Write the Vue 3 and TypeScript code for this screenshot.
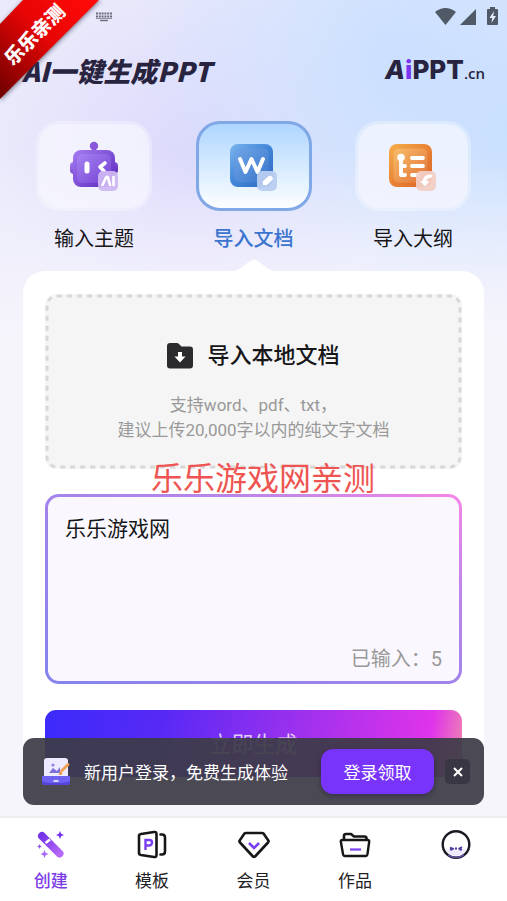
<script setup lang="ts">
import { ref, computed } from 'vue'

type TabId = 'topic' | 'doc' | 'outline'

const tabs: { id: TabId; label: string }[] = [
  { id: 'topic', label: '输入主题' },
  { id: 'doc', label: '导入文档' },
  { id: 'outline', label: '导入大纲' },
]
const activeTab = ref<TabId>('doc')

const navItems = [
  { id: 'create', label: '创建' },
  { id: 'template', label: '模板' },
  { id: 'member', label: '会员' },
  { id: 'works', label: '作品' },
  { id: 'me', label: '' },
]
const activeNav = ref('create')

const content = ref('乐乐游戏网')
const count = computed(() => content.value.length)
const showLogin = ref(true)
</script>

<template>
  <div class="page">
    <div class="status">
      <svg class="keyboard" width="18" height="10" viewBox="0 0 18 10" aria-hidden="true">
        <path d="M1 1.5H17M1 4.5H17" stroke="#6b6d7c" stroke-width="2" stroke-dasharray="2 .8" />
        <path d="M1 6.5H17" stroke="#8d8f9e" stroke-width="1" />
        <path d="M5 8.5H13" stroke="#6b6d7c" stroke-width="1.4" />
      </svg>
      <svg class="signals" width="64" height="20" viewBox="0 0 64 20" aria-hidden="true" fill="#505966">
        <path d="M0 5Q10.500 -3 21 5L10.500 18Z" />
        <path d="M41 2V18H25Z" />
        <path d="M55 0H60V2H62Q63 2 63 3V17Q63 18 62 18H53Q52 18 52 17V3Q52 2 53 2H55Z" />
        <path d="M59 4L54.500 11H57.200L56.500 16L61 9H58.200Z" fill="#e4eeff" />
      </svg>
    </div>

    <header class="header">
      <h1 class="title">AI一键生成PPT</h1>
      <div class="logo">
        <span class="logo-a">A</span><span class="logo-i">i</span><span class="logo-ppt">PPT</span><span class="logo-cn">.cn</span>
      </div>
    </header>

    <nav class="tabs" aria-label="创建方式">
      <button
        v-for="tab in tabs"
        :key="tab.id"
        type="button"
        class="tab"
        :class="{ active: activeTab === tab.id }"
        @click="activeTab = tab.id"
      >
        <span class="tab-card">
          <svg v-if="tab.id === 'topic'" width="50" height="50" viewBox="0 0 50 50" aria-hidden="true">
            <defs>
              <linearGradient id="robot" x1="0" y1="0" x2="1" y2="1">
                <stop offset="0" stop-color="#a47bf0" /><stop offset="1" stop-color="#5b28bd" />
              </linearGradient>
              <linearGradient id="robotFace" x1="0" y1="0" x2="1" y2="1">
                <stop offset="0" stop-color="#a583f2" /><stop offset="1" stop-color="#7440d2" />
              </linearGradient>
            </defs>
            <circle cx="25" cy="5" r="4.200" fill="#8a55dc" />
            <path d="M23 7H27V12H23Z" fill="#8a55dc" />
            <rect x="1" y="21" width="48" height="12" rx="4" fill="url(#robot)" />
            <rect x="4" y="9" width="42" height="37" rx="8" fill="url(#robot)" />
            <rect x="8" y="13" width="34" height="29" rx="5" fill="url(#robotFace)" />
            <path d="M18 23V30" stroke="#fff" stroke-width="5" stroke-linecap="round" />
            <path d="M36 22L31 26L35 30" fill="none" stroke="#fff" stroke-width="3.600" stroke-linecap="round" stroke-linejoin="round" />
            <rect x="29" y="30" width="20" height="20" rx="5" fill="#cdb7f2" fill-opacity=".94" />
            <path d="M33.500 44L37 36.500Q38 35 39 36.500L41 44M44.500 36V44" fill="none" stroke="#fff" stroke-width="2.600" stroke-linecap="round" stroke-linejoin="round" />
          </svg>
          <svg v-else-if="tab.id === 'doc'" width="50" height="50" viewBox="0 0 50 50" aria-hidden="true">
            <defs>
              <linearGradient id="docBox" x1="0" y1="0" x2="1" y2="1">
                <stop offset="0" stop-color="#7bb5ed" /><stop offset=".5" stop-color="#4185d8" /><stop offset="1" stop-color="#2d68bf" />
              </linearGradient>
              <linearGradient id="docFace" x1="0" y1="0" x2="1" y2="1">
                <stop offset="0" stop-color="#70a6e7" /><stop offset="1" stop-color="#3975cb" />
              </linearGradient>
            </defs>
            <rect x="1" y="3" width="43" height="43" rx="8" fill="url(#docBox)" />
            <rect x="5.500" y="7.500" width="34" height="34" rx="5" fill="url(#docFace)" />
            <path d="M11 18L16.500 31L22.500 18L28.500 31L34 18" fill="none" stroke="#fff" stroke-width="4" stroke-linecap="round" stroke-linejoin="round" />
            <rect x="28" y="30" width="20" height="20" rx="5" fill="#b9cdf0" fill-opacity=".95" />
            <path d="M36.500 41.500L41 37.500" stroke="#fff" stroke-width="5.400" stroke-linecap="round" />
            <path d="M34 44V40L38 44Z" fill="#fff" />
          </svg>
          <svg v-else width="50" height="50" viewBox="0 0 50 50" aria-hidden="true">
            <defs>
              <linearGradient id="listBox" x1="0" y1="0" x2="1" y2="1">
                <stop offset="0" stop-color="#f6b04d" /><stop offset=".5" stop-color="#e98233" /><stop offset="1" stop-color="#d9652c" />
              </linearGradient>
              <linearGradient id="listFace" x1="0" y1="0" x2="1" y2="1">
                <stop offset="0" stop-color="#f8bd68" /><stop offset="1" stop-color="#e27238" />
              </linearGradient>
            </defs>
            <rect x="1" y="3" width="43" height="43" rx="8" fill="url(#listBox)" />
            <rect x="5.500" y="7.500" width="34" height="34" rx="5" fill="url(#listFace)" />
            <circle cx="13" cy="16.500" r="3.800" fill="#fff" />
            <path d="M13 17V34H17M13 25H17M24 17H35M24 25H35M24 34H30" fill="none" stroke="#fff" stroke-width="3.800" stroke-linecap="round" stroke-linejoin="round" />
            <rect x="28" y="30" width="20" height="20" rx="5" fill="#f2cec6" fill-opacity=".94" />
            <path d="M42.500 35Q36 35.500 36.500 42" fill="none" stroke="#fff" stroke-width="3.600" stroke-linecap="round" />
            <path d="M32 40H41.500L37 45.500Z" fill="#fff" />
          </svg>
        </span>
        <span class="tab-label">{{ tab.label }}</span>
        <svg v-if="activeTab === tab.id" class="pointer" width="38" height="12" viewBox="0 0 38 12" aria-hidden="true">
          <path d="M0 12Q3 11 6 9L15 2Q19 -1 23 2L32 9Q35 11 38 12Z" fill="#fff" />
        </svg>
      </button>
    </nav>

    <main class="panel">
      <button type="button" class="drop">
        <svg class="drop-border" aria-hidden="true"><rect /></svg>
        <span class="drop-title">
          <svg width="26" height="26" viewBox="0 0 26 26" aria-hidden="true">
            <path d="M3 0H10Q11 0 12 1L14.500 3.500H23Q26 3.500 26 6.500V22.500Q26 25.500 23 25.500H3Q0 25.500 0 22.500V3Q0 0 3 0Z" fill="#2b2b2d" />
            <path d="M11 9H15V13.500H18.500L13 19.500L7.500 13.500H11Z" fill="#fff" />
          </svg>
          <span>导入本地文档</span>
        </span>
        <span class="drop-hint">支持word、pdf、txt，<br />建议上传20,000字以内的纯文字文档</span>
      </button>

      <div class="editor">
        <span class="watermark">乐乐游戏网亲测</span>
        <textarea v-model="content" class="editor-text" aria-label="文档内容"></textarea>
        <span class="counter">已输入：{{ count }}</span>
      </div>

      <button type="button" class="generate">立即生成</button>
    </main>

    <footer class="dock">
      <div v-if="showLogin" class="toast">
        <svg width="30" height="30" viewBox="0 0 30 30" aria-hidden="true">
          <rect x="3" y="1" width="24" height="24" rx="3" fill="#eeeaff" />
          <circle cx="12" cy="8" r="1.600" fill="#8d85dc" />
          <path d="M8 16L12 11L16 14L19 10V16Z" fill="#7a70d8" />
          <path d="M27 7.500L20.500 14" stroke="#f0a254" stroke-width="3" stroke-linecap="round" />
          <path d="M17 17.500Q19 17 18.500 14.500L21.500 16.500Q21 18.500 17 17.500Z" fill="#e8883d" />
          <path d="M1 19H29V25Q29 28 26 28H4Q1 28 1 25Z" fill="#6f61f2" />
          <path d="M1 24Q1 28 4 28H26Q29 28 29 24Q26 26 15 26Q4 26 1 24Z" fill="#5543dc" />
          <path d="M13 24H17" stroke="#fff" stroke-width="1.400" stroke-linecap="round" />
        </svg>
        <span class="toast-text">新用户登录，免费生成体验</span>
        <button type="button" class="login">登录领取</button>
        <button type="button" class="close" aria-label="关闭" @click="showLogin = false">
          <svg width="10" height="10" viewBox="0 0 10 10" aria-hidden="true">
            <path d="M1 1L9 9M9 1L1 9" stroke="#fff" stroke-width="2" />
          </svg>
        </button>
      </div>

      <nav class="bottom-nav" aria-label="主导航">
        <a
          v-for="item in navItems"
          :key="item.id"
          :href="'#' + item.id"
          class="nav-item"
          :class="{ active: activeNav === item.id }"
          :aria-label="item.label || '我的'"
          @click.prevent="activeNav = item.id"
        >
          <svg width="32" height="32" viewBox="0 0 32 32" fill="none" aria-hidden="true">
            <template v-if="item.id === 'create'">
              <defs>
                <linearGradient id="wand" x1="0" y1="0" x2="1" y2="1">
                  <stop offset="0" stop-color="#7434e8" /><stop offset="1" stop-color="#b468f8" />
                </linearGradient>
              </defs>
              <path d="M7 7L24.500 24.500" stroke="url(#wand)" stroke-width="8" stroke-linecap="round" />
              <path d="M10.500 14L15 10.500" stroke="#fff" stroke-width="2.600" />
              <path d="M25 2L26.200 4.800L29 6L26.200 7.200L25 10L23.800 7.200L21 6L23.800 4.800Z" fill="#7434e8" />
              <path d="M9.500 21L10.700 23.800L13.500 25L10.700 26.200L9.500 29L8.300 26.200L5.500 25L8.300 23.800Z" fill="#a86bf5" />
              <path d="M4.500 15L5.300 16.700L7 17.500L5.300 18.300L4.500 20L3.700 18.300L2 17.500L3.700 16.700Z" fill="#8f55ea" />
            </template>
            <template v-else-if="item.id === 'template'">
              <path d="M5 5L18 3Q20.500 2.600 20.500 5V26Q20.500 28.400 18 28L5 26Q3 25.600 3 24V7Q3 5.300 5 5Z" stroke="#17171a" stroke-width="2.600" />
              <path d="M24.500 5.500H26Q29 5.500 29 8.500V22.500Q29 25.500 26 25.500H24.500" stroke="#17171a" stroke-width="2.600" stroke-linecap="round" />
              <path d="M9.500 21V11H13.500Q16 11 16 13.500T13.500 16.500H9.500" stroke="#7b3ff2" stroke-width="2.400" />
            </template>
            <template v-else-if="item.id === 'member'">
              <path d="M8 4H24Q25 4 25.700 4.700L30.300 11.500Q31 12.500 30 13.500L17.500 27Q16 28.500 14.500 27L2 13.500Q1 12.500 1.700 11.500L6.300 4.700Q7 4 8 4Z" stroke="#17171a" stroke-width="2.600" stroke-linejoin="round" />
              <path d="M11 14L16 19L21 14" stroke="#7b3ff2" stroke-width="2.600" />
            </template>
            <template v-else-if="item.id === 'works'">
              <path d="M5 11V7Q5 5 7 5H12L15 7.500H25.500Q27.500 7.500 27.500 9.500V11" stroke="#17171a" stroke-width="2.600" stroke-linejoin="round" />
              <path d="M3 11H29Q30.300 11 30.200 12.500L28.500 25Q28.300 27 26.500 27H6Q4.200 27 4 25L1.800 12.500Q1.700 11 3 11Z" stroke="#17171a" stroke-width="2.400" stroke-linejoin="round" />
              <path d="M11 20.500H22" stroke="#7b3ff2" stroke-width="2.200" />
            </template>
            <template v-else>
              <path d="M6 20H26Q24 27 16 27T6 20Z" fill="#efeafd" />
              <circle cx="16" cy="15.500" r="13.300" stroke="#1b1923" stroke-width="2.400" />
              <path d="M10 18.500L14 20M10 20.500H12.500M18.500 20L22 18M19.500 20.500H22M15 19.500H17" stroke="#4e3a9c" stroke-width="1.800" />
              <path d="M8 26Q16 31 24 26" stroke="#5f4c98" stroke-width="1.600" />
            </template>
          </svg>
          <span class="nav-label">{{ item.label }}</span>
        </a>
      </nav>
    </footer>

    <div class="ribbon">
      <svg width="106" height="106" viewBox="0 0 106 106" role="img" aria-label="乐乐亲测">
        <defs>
          <linearGradient id="band" x1="90" y1="0" x2="0" y2="90" gradientUnits="userSpaceOnUse">
            <stop offset="0" stop-color="#ff0a08" /><stop offset=".45" stop-color="#e60505" /><stop offset="1" stop-color="#760000" />
          </linearGradient>
          <filter id="bandShadow"><feGaussianBlur stdDeviation="2" /></filter>
        </defs>
        <path d="M24 0H101L0 101V26Z" fill="#33334d" fill-opacity=".6" filter="url(#bandShadow)" />
        <path d="M23 0H99L0 99V24Z" fill="url(#band)" />
        <text class="ribbon-text" x="35" y="35" transform="rotate(-45 35 35)" text-anchor="middle" dominant-baseline="central">乐乐亲测</text>
      </svg>
    </div>
  </div>
</template>

<style>
body {
  margin: 0;
  background: #f6f5fc;
}
</style>

<style scoped>
.page {
  position: relative;
  display: flex;
  flex-direction: column;
  min-height: 100vh;
  color: #161618;
  font-family: Roboto, "Noto Sans CJK SC", sans-serif;
  background:
    linear-gradient(180deg, rgba(246, 245, 252, 0) 150px, #f6f5fc 340px),
    radial-gradient(circle at 78% 60px, #cbe0ff 0, rgba(203, 224, 255, 0) 260px),
    radial-gradient(circle at 100% 130px, #c6e0ff 0, rgba(198, 224, 255, 0) 220px),
    radial-gradient(circle at 38% 170px, #dcd8fc 0, rgba(220, 216, 252, 0) 190px),
    #e9e9fb;
}

button {
  padding: 0;
  border: 0;
  background: none;
  color: inherit;
  font: inherit;
  cursor: pointer;
}

svg {
  flex: none;
}

.status {
  display: flex;
  justify-content: space-between;
  align-items: center;
  height: 34px;
  padding: 0 8px 0 95px;
}

.header {
  display: flex;
  justify-content: space-between;
  align-items: center;
  height: 74px;
  padding: 0 22px;
}

.title {
  margin: 0;
  color: #28233f;
  font-family: "Noto Sans CJK SC", sans-serif;
  font-size: 27px;
  font-style: italic;
  font-weight: 900;
  line-height: 40px;
}

.logo {
  display: flex;
  align-items: baseline;
  color: #28233f;
  font-family: Inter, sans-serif;
  font-size: 26px;
  font-weight: 800;
  line-height: 40px;
}

.logo-a {
  font-style: italic;
}

.logo-i {
  color: #7b35f0;
}

.logo-cn {
  font-family: "Open Sans", sans-serif;
  font-size: 15px;
  font-weight: 600;
}

.tabs {
  display: flex;
  justify-content: space-between;
  padding: 13px 36px 0;
}

.tab {
  position: relative;
  display: flex;
  flex-direction: column;
  align-items: center;
  gap: 12px;
  height: 150px;
}

.tab-card {
  display: flex;
  align-items: center;
  justify-content: center;
  box-sizing: border-box;
  width: 116px;
  height: 90px;
  border: 3px solid rgba(255, 255, 255, 0.3);
  border-radius: 24px;
  background: rgba(247, 247, 255, 0.75);
  background-clip: padding-box;
}

.tab-label {
  font-size: 20px;
  line-height: 32px;
}

.tab.active .tab-card {
  border-color: #80a8e6;
  background: linear-gradient(180deg, #afd6ff, #fcfeff);
}

.tab.active .tab-label {
  color: #3c75cf;
  font-weight: 500;
}

.pointer {
  position: absolute;
  bottom: 0;
}

.panel {
  display: flex;
  flex-direction: column;
  margin: 0 23px 16px;
  padding: 23px 22px;
  border-radius: 22px;
  background: #fff;
}

.drop {
  position: relative;
  display: flex;
  flex-direction: column;
  align-items: center;
  gap: 20px;
  padding: 45px 12px 26px;
  border-radius: 11px;
  background: #f5f5f5;
}

.drop-border {
  position: absolute;
  inset: 0;
  width: 100%;
  height: 100%;
}

.drop-border rect {
  x: 2px;
  y: 2px;
  width: calc(100% - 4px);
  height: calc(100% - 4px);
  rx: 10px;
  fill: none;
  stroke: #d8d8d8;
  stroke-width: 3px;
  stroke-dasharray: 5 5;
}

.drop-title {
  display: flex;
  align-items: center;
  gap: 14px;
  font-size: 22px;
  font-weight: 500;
  line-height: 34px;
}

.drop-hint {
  color: #999;
  font-size: 17px;
  line-height: 25px;
}

.editor {
  position: relative;
  display: flex;
  flex-direction: column;
  box-sizing: border-box;
  height: 190px;
  margin-top: 25px;
  padding: 17px 17px 7px;
  border: 3px solid transparent;
  border-radius: 14px;
  background:
    linear-gradient(#faf8fe, #faf8fe) padding-box,
    linear-gradient(25deg, #8583ec 0%, #a284ea 50%, #ba85e8 72%, #f586e8 100%) border-box;
}

.editor-text {
  flex: 1;
  padding: 0;
  border: 0;
  outline: 0;
  resize: none;
  background: transparent;
  color: #161618;
  font: inherit;
  font-size: 21px;
  line-height: 30px;
}

.counter {
  align-self: flex-end;
  color: #999;
  font-size: 20px;
  line-height: 30px;
}

.watermark {
  position: absolute;
  top: -42px;
  left: 103px;
  color: #ee5552;
  font-size: 32px;
  line-height: 48px;
  white-space: nowrap;
  pointer-events: none;
}

.generate {
  height: 67px;
  margin-top: 26px;
  padding-bottom: 4px;
  border-radius: 11px;
  background: linear-gradient(100deg, #3b2bfb 0%, #5829f5 28%, #9230ee 55%, #e034ea 91%, #ef8cad 100%);
  color: rgba(255, 255, 255, 0.75);
  font-size: 22px;
}

.dock {
  position: sticky;
  bottom: 0;
  margin-top: auto;
}

.toast {
  position: absolute;
  right: 23px;
  bottom: 96px;
  left: 23px;
  display: flex;
  align-items: center;
  box-sizing: border-box;
  height: 67px;
  padding: 0 14px 0 18px;
  border-radius: 11px;
  background: rgba(61, 59, 71, 0.93);
  color: #fff;
  font-size: 17px;
}

.toast-text {
  flex: 1;
  margin-left: 13px;
  white-space: nowrap;
}

.login {
  width: 113px;
  height: 45px;
  margin-right: 11px;
  border-radius: 12px;
  background: #7834fb;
  box-shadow: 0 2px 5px rgba(20, 10, 50, 0.35);
}

.close {
  display: flex;
  align-items: center;
  justify-content: center;
  width: 25px;
  height: 25px;
  border-radius: 5px;
  background: #393743;
}

.bottom-nav {
  display: flex;
  box-sizing: border-box;
  height: 85px;
  padding-top: 11px;
  border-top: 2px solid #efeff3;
  background: #fff;
}

.nav-item {
  flex: 1;
  display: flex;
  flex-direction: column;
  align-items: center;
  gap: 8px;
  color: #222226;
  font-size: 17px;
  line-height: 24px;
  text-decoration: none;
}

.nav-item.active {
  color: #7b3ce8;
  font-weight: 500;
}

.ribbon {
  position: absolute;
  top: 0;
  left: 0;
  line-height: 0;
}

.ribbon-text {
  fill: #fff;
  font-size: 19px;
  font-weight: 900;
}
</style>
